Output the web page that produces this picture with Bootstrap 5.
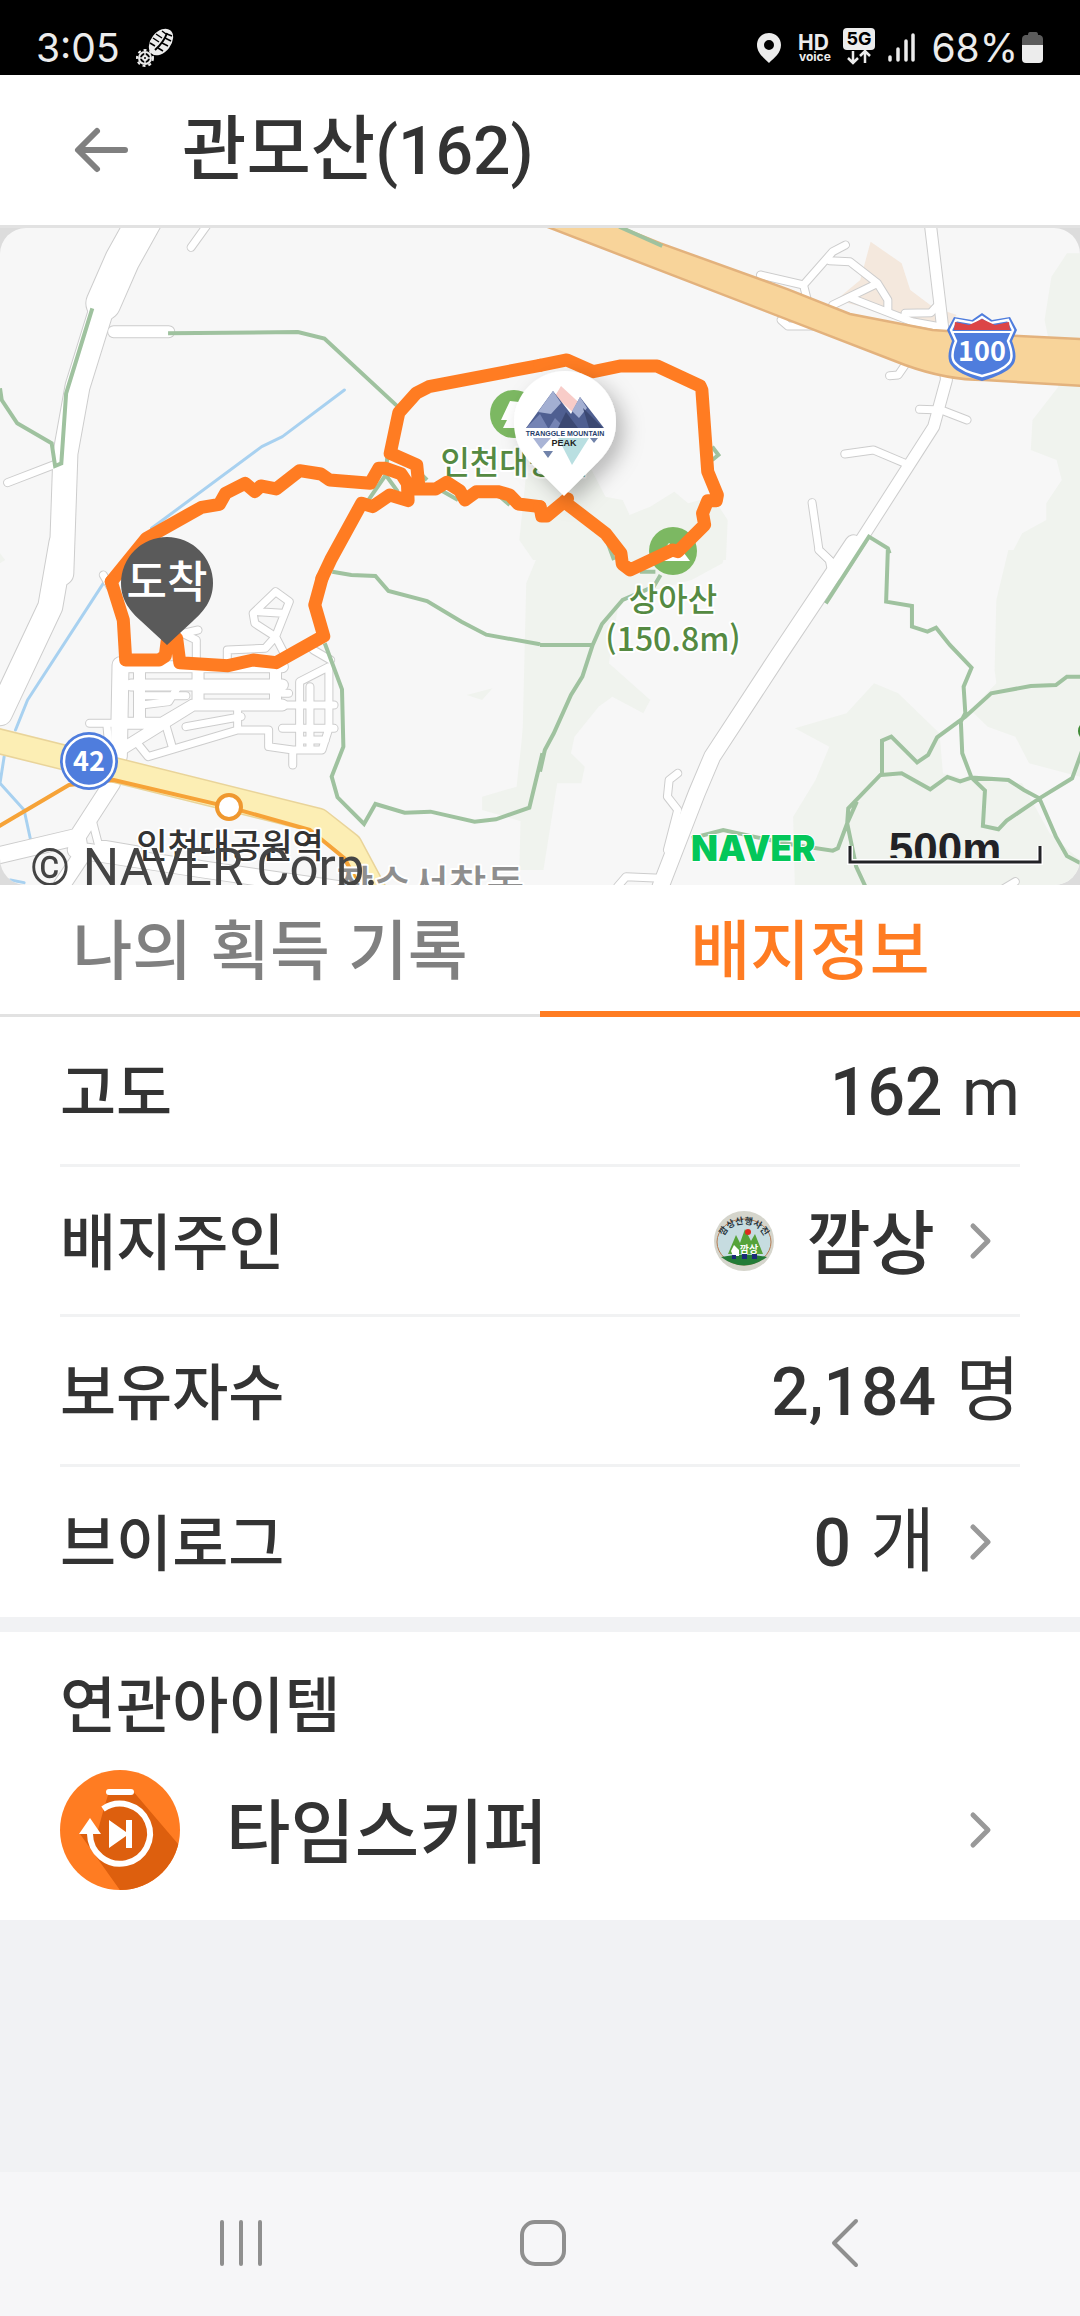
<!DOCTYPE html>
<html lang="ko">
<head>
<meta charset="utf-8">
<meta name="viewport" content="width=device-width, initial-scale=1">
<title>관모산(162)</title>
<link href="https://cdn.jsdelivr.net/npm/bootstrap@5.3.0/dist/css/bootstrap.min.css" rel="stylesheet">
<style>
  :root { --orange:#ff7c22; --ink:#333; --line:#f1f2f3; }
  body { font-family:"Noto Sans CJK KR","Noto Sans",sans-serif; color:var(--ink); background:#f1f2f4; line-height:1; }
  a { color:inherit; text-decoration:none; }
  .status { height:75px; background:#000; color:#ececec; font-family:Inter,Roboto,sans-serif; font-size:39px; line-height:56px; padding:20px 36px 0; }
  .battery { margin-top:12px; }
  .topbar { height:153px; border-bottom:3px solid #e2e2e2; padding:0 72px; gap:52px; }
  .topbar h1, .val, .item-name { font-size:70px; font-weight:500; line-height:80px; padding-bottom:4px; }
  .num { font-family:Roboto,"Noto Sans CJK KR",sans-serif; font-size:66px; }
  .map-box { background:#dcdcdc; }
  .map-box svg { display:block; width:100%; height:auto; }
  .tabs { height:132px; }
  .tab { font-size:65px; font-weight:500; color:#808080; border:0; border-bottom:3px solid #e2e2e2; background:#fff; padding:0 0 6px; }
  .tab.on { color:var(--orange); border-bottom:6px solid var(--orange); padding-bottom:3px; }
  .info { padding:0 60px; }
  .info-row { height:150px; border-bottom:3px solid var(--line); }
  .info-row:last-child { border-bottom:0; }
  .lbl { font-size:61px; font-weight:500; line-height:80px; padding-bottom:4px; }
  .val .lite { font-weight:400; }
  .go { gap:34px; padding-right:28px; }
  .avatar { width:60px; height:60px; margin-right:-2px; }
  .related { margin-top:15px; height:288px; padding:30px 60px; }
  .related h2 { margin-bottom:24px; }
  .item { gap:46px; padding-right:28px; height:120px; }
  .sysnav { height:144px; background:#f6f6f8; padding:0 84px 2px 90px; }
  .sysnav button { background:none; border:0; padding:0; }
  .spacer { min-height:252px; }

  .tile path, .tile polyline { vector-effect:non-scaling-stroke; }
  .wood { fill:#f0f3ee; }
  .xxl { stroke-width:calc(var(--edge) + 34px); }
  .xl { stroke-width:calc(var(--edge) + 24px); }
  .lg { stroke-width:calc(var(--edge) + 16px); }
  .md { stroke-width:calc(var(--edge) + 11px); }
  .sm { stroke-width:calc(var(--edge) + 7px); }
  .casing { --edge:2px; stroke:#cdcdcd; }
  .paving { --edge:0px; stroke:#fff; }
  .lines { fill:none; stroke-linejoin:round; stroke-linecap:round; }
  .trail { stroke:#9fc29f; stroke-width:4px; stroke-linejoin:miter; stroke-linecap:butt; }
  .water { stroke:#a8d1f0; stroke-width:3px; }
  .route { stroke:var(--orange); stroke-width:13px; }
  .map-txt { font-family:"Noto Sans CJK KR",sans-serif; font-weight:500; paint-order:stroke; stroke:#fff; stroke-width:4px; stroke-linejoin:round; }
  .green-txt { fill:#558a42; font-size:32px; text-anchor:middle; }
</style>
</head>
<body class="min-vh-100 d-flex flex-column">

<div class="status d-flex justify-content-between">
  <div class="d-flex gap-3 align-items-start">
    <span>3:05</span>
    <svg width="40" height="40" viewBox="0 0 40 40" class="mt-2" aria-hidden="true">
      <ellipse cx="25" cy="14" rx="10" ry="15" transform="rotate(38 25 14)" fill="#ececec"/>
      <g stroke="#000" fill="none"><path d="M31 5Q28 14 19 22" stroke-width="2"/><path d="M20 6l6 4M17 10l6 4M14 15l5 3M26 3l4 3M36 8l-5-2M35 13l-6-3M32 18l-6-3M27 23l-5-3" stroke-width="1.500"/></g>
      <circle cx="9" cy="30" r="8" fill="#000" stroke="#ececec" stroke-width="2" stroke-dasharray="3 3"/>
      <circle cx="9" cy="30" r="6" fill="none" stroke="#ececec" stroke-width="2"/>
      <circle cx="9" cy="30" r="2" fill="none" stroke="#ececec" stroke-width="2"/><path d="M9 24v4M9 32v4M3 30h4M11 30h4" stroke="#ececec" stroke-width="1.500"/>
    </svg>
  </div>
  <div class="d-flex align-items-start">
    <svg width="174" height="46" viewBox="750 25 174 46" class="mt-1" aria-hidden="true">
      <path fill="#ececec" fill-rule="evenodd" d="M770 34c-7 0-12 5-12 12 0 8 7 13 12 18 5-5 12-10 12-18 0-7-5-12-12-12zm0 7a5 5 0 110 10 5 5 0 010-10z"/>
      <text x="799" y="51" font-size="21" font-weight="700" fill="#ececec">HD</text>
      <text x="800" y="62" font-size="12" font-weight="700" fill="#ececec">voice</text>
      <rect x="844" y="29" width="32" height="22" rx="4" fill="#ececec"/>
      <text x="860" y="46" font-size="18" font-weight="700" text-anchor="middle" fill="#000">5G</text>
      <path d="M854 52v12m-5-5 5 5 5-5M866 64V52m-5 5 5-5 5 5" fill="none" stroke="#ececec" stroke-width="2.500"/>
      <path d="M891 58v3M899 50v11M907 42v19M914 36v25" stroke="#ececec" stroke-width="3.500" stroke-linecap="round"/>
    </svg>
    <span class="ms-2 me-1">68%</span>
    <svg width="22" height="32" viewBox="0 0 22 32" class="battery" aria-hidden="true">
      <path d="M6 3q0-3 2-3h6q2 0 2 3h2q3 1 3 4v6H0V7q0-3 3-4z" fill="#5b5b5b"/><path d="M0 13h21v14q0 4-4 4H4q-4 0-4-4z" fill="#ececec"/>
    </svg>
  </div>
</div>

<header class="topbar bg-white d-flex align-items-center">
  <a href="#" aria-label="뒤로">
    <svg width="58" height="48" viewBox="0 0 58 48" fill="none" stroke="#808080" stroke-width="6" stroke-linecap="round" stroke-linejoin="round"><path d="M53 24H7M25 5 6 24l19 19"/></svg>
  </a>
  <h1 class="m-0">관모산<span class="num">(162)</span></h1>
</header>

<div class="map-box">
<svg viewBox="0 228 1080 657" role="img" aria-label="관모산 등산 경로 지도">
  <defs>
    <clipPath id="frame"><rect x="0" y="228" width="1080" height="657" rx="26"/></clipPath>
    <clipPath id="scaleClip"><rect x="860" y="820" width="160" height="38"/></clipPath>
    <filter id="soft" x="-50%" y="-50%" width="200%" height="200%"><feDropShadow dx="8" dy="8" stdDeviation="10" flood-opacity=".25"/></filter>
    <g id="roads" class="tile">
      <g transform="translate(0 220) scale(.3444 .3333)">
        <path class="xxl" d="M425 -10 355 120 300 250"/>
        <path class="xl" d="M300 250 225 500 190 700 178 1060"/>
        <path class="sm" d="M605 10 555 82M155 735 22 788"/>
        <path class="md" d="M330 335H490"/>
      </g>
      <g transform="translate(540 220) scale(.3444 .3333)">
        <path class="md" d="M1132 0 1170 330 1180 480 1143 620 870 1060"/>
        <path class="sm" d="M887 75 850 95 765 195 640 165M765 195 775 235M840 122 900 125 980 190 1010 240V270M980 190 850 255M905 235 1080 305 1160 320M1060 280 1135 278 1160 250M700 300 720 318 800 318M1015 467 1040 465 1060 435M1102 568 1165 570 1240 600M885 702 968 690 1060 730M790 848 810 990 850 1030"/>
      </g>
      <g transform="translate(0 550) scale(.3444 .3333)">
        <path class="xl" d="M178 -20 146 170 0 490"/>
        <path class="lg" d="M350 345 345 620M325 700 225 860 0 915M225 860 235 920 180 1005M220 900 600 960 1000 1020"/>
        <path class="md" d="M350 350H820M380 405H820M575 350V460M800 350V465M820 465H560L350 600M350 520H470L560 465M405 360V520"/>
        <path class="sm" d="M820 465H970M820 535H970M690 465V540H780V590L850 600 935 600 955 535V350L870 395V600M850 600V645M690 540 430 620 395 575M500 590 480 520M540 530 700 500M410 465 490 455 520 405M410 437H540M590 420H800M900 410V600M820 430H838M800 125 840 155 800 260 740 220 735 190 800 125M750 185 820 190M800 260 770 295 660 300V340M800 260 830 320M575 240 530 250 570 270V330M260 520H350M300 75 320 110M310 520 315 580M270 820 285 880 400 900M960 330 910 300M870 570 945 570"/>
      </g>
      <g transform="translate(540 550) scale(.3444 .3333)">
        <path class="lg" d="M910 -20 690 320 500 620 455 730 350 1010"/>
        <path class="sm" d="M810 0 840 30 850 80M400 670 375 690 370 740 400 780 370 900M350 985 250 980 225 1010M1380 995 1340 1020"/>
      </g>
    </g>
  </defs>

  <g clip-path="url(#frame)">
    <rect x="0" y="228" width="1080" height="657" fill="#f7f7f7"/>
    <!-- woodland -->
    <g class="wood">
      <g transform="translate(540 220) scale(.3444 .3333)">
        <path d="M1568 100H1530L1485 170 1465 300 1505 500 1430 600 1425 690 1500 720 1515 780 1470 850V900L1400 940 1360 1020H1568z"/>
        <path d="M-40 760 150 750 190 830 240 840 260 885 320 860 390 815 430 850 500 830 545 900 540 1020H-20L-60 960z"/>
        <path d="M960 65 1050 130 1075 210 1140 260 1210 285 1190 310 1100 305 860 240 930 180z" fill="#f4e8dd"/>
      </g>
      <g transform="translate(540 550) scale(.3444 .3333)">
        <path d="M1360 0 1325 150 1320 360 1325 400 1250 480 1300 530 1380 560 1420 640 1568 680V0z"/>
        <path d="M0 0H540L530 40 440 90 230 150 200 340 320 450 300 490 210 440 170 470 100 560 90 610 130 650 120 700 50 700 10 960H-60L-40 100z"/>
        <path d="M970 400 1040 430 1160 550 1170 670 1250 690 1400 700 1480 850 1568 930V1010H740L735 800 800 690 840 590 740 535 890 490z"/>
      </g>
      <g transform="translate(0 550) scale(.3444 .3333)"><path d="M1568 420 1520 520 1500 710 1400 740 1400 780 1568 830zM1355 435 1430 415 1400 450zM0 10 15 30 0 40z"/></g>
    </g>
    <!-- streams -->
    <g class="lines tile water">
      <path transform="translate(0 220) scale(.3444 .3333)" d="M1000 510 820 650 760 680 440 925"/>
      <path transform="translate(0 550) scale(.3444 .3333)" d="M300 100 80 450 45 540M12 620 0 700 70 780 92 885M30 990 70 998"/>
    </g>
    <use href="#roads" class="lines casing"/>
    <use href="#roads" class="lines paving"/>

    <!-- expressway -->
    <g class="tile" transform="translate(540 220) scale(.3444 .3333)">
      <path d="M20 20 1060 435Q1180 480 1290 480L1580 498V358L1390 348 1140 330 900 282 720 208 350 70 230 20z" fill="#f8d49a" stroke="#e3b27d" stroke-width="2.500"/>
      <path class="trail" d="M230 20 355 78" fill="none"/>
    </g>
    <!-- national road 42 and metro line -->
    <g class="tile lines" transform="translate(0 550) scale(.3444 .3333)">
      <path d="M-10 572 925 812 1015 885 1085 1020" stroke="#e9d49a" stroke-width="26"/>
      <path d="M-10 572 925 812 1015 885 1085 1020" stroke="#fceeb4" stroke-width="23"/>
      <path d="M-5 830 200 705 330 690 660 770 900 840 1000 925 1045 1010" stroke="#f6a338" stroke-width="4"/>
    </g>
    <!-- hiking trails -->
    <g class="tile lines">
      <path class="trail" transform="translate(0 220) scale(.3444 .3333)" d="M268 265 192 520 178 730 160 738 150 670 50 610 5 540 0 505M488 340 865 336 942 356 1155 560M1125 705 1120 765 1070 840M1120 765 1155 815M1200 740 1240 780M1270 805 1330 840M1440 820 1480 855"/>
      <path class="trail" transform="translate(540 220) scale(.3444 .3333)" d="M500 680 518 705 500 720M830 1150 955 950 1010 985 1015 1000M190 950 215 1020"/>
      <path class="trail" transform="translate(0 550) scale(.3444 .3333)" d="M965 65 1020 75 1090 78 1128 123 1240 153 1340 215 1412 254 1568 283M943 280 993 418 997 590 963 680 980 742 1057 822 1090 762 1175 788 1250 785 1378 815 1440 808 1537 773 1575 610"/>
      <path class="trail" transform="translate(540 550) scale(.3444 .3333)" d="M0 285H153M350 75 330 110 240 150 180 222 153 285 123 380 90 435 40 550 14 600 0 665M1010 0 1005 155 1080 168V230L1125 245 1150 233 1190 285 1253 353 1230 410 1235 490 1222 515 1226 610 1253 683 1292 722 1286 828 1331 838 1355 812 1450 745 1545 685 1575 600M1580 380H1530L1498 405 1425 408 1310 430 1235 500 1153 562 1127 615 1095 637 1020 560 993 572V670L895 775 892 820 918 950 945 1010M990 675 1050 670 1133 718 1183 681 1220 694 1253 683 1360 690 1405 720 1450 745 1498 860 1530 918 1570 940M920 755 892 820 865 895 850 902 740 885 620 860 532 840 440 865M290 65H335"/>
    </g>
    <circle cx="1088" cy="731" r="10" fill="#3f8a36"/>

    <!-- park and peak markers -->
    <circle cx="514" cy="414" r="24" fill="#7cb862"/><path d="M510 401l-9 19h6l-4 8h16v-26z" fill="#fff"/>
    <circle cx="673" cy="551" r="24" fill="#7cb862"/><path d="M655 561l14-18 5 5 4-3 12 16z" fill="#fff"/>
    <text class="map-txt green-txt" x="514" y="474">인천대공원</text>

    <!-- recorded route -->
    <g class="tile lines route">
      <path transform="translate(0 220) scale(.3444 .3333)" d="M323 1085 425 955 585 862 637 853 655 820 712 790 740 815 757 798 802 807 870 752 932 762 957 780 1075 790 1100 745H1120L1165 762 1183 790 1185 842 1132 825 1082 860 1050 850 960 1020 935 1075M1190 807H1265L1297 787 1335 812 1350 840 1383 815H1445L1480 825 1505 852 1568 860M1568 436 1245 500 1208 520 1158 578 1133 700 1210 735 1217 807"/>
      <path transform="translate(540 220) scale(.3444 .3333)" d="M0 860 5 888H20L70 845 80 836 70 845 190 940 235 1000 239 1032 262 1050 385 990 400 995 478 915 472 880 487 842H512L515 825 487 755 470 510 465 498 340 438H235L155 455 78 420 0 436"/>
      <path transform="translate(0 550) scale(.3444 .3333)" d="M485 275 480 318 462 330H365L358 210 323 95M935 85 914 165 940 258 802 338 735 330 662 347 522 338 513 265 485 275"/>
    </g>

    <!-- expressway shield -->
    <path d="M982 313l10 7 18-3 7 13-5 11q7 18 0 25-6 8-30 15-24-7-30-15-7-7 0-25l-5-11 7-13 18 3z" fill="#4f7ddd"/>
    <path d="M982 317l9 6 17-3 5 10-5 11q7 17 0 23-6 7-26 12-20-5-26-12-7-6 0-23l-5-11 5-10 17 3z" fill="#4f7ddd" stroke="#fff" stroke-width="2.500"/>
    <path d="M955 322l14 3 13-6 13 6 14-3 1 8h-56z" fill="#dc4547"/><path d="M953 332h58" stroke="#fff" stroke-width="2"/>
    <text x="982" y="361" text-anchor="middle" font-family="Noto Sans CJK KR" font-weight="700" font-size="27" fill="#fff">100</text>
    <!-- route 42 shield -->
    <circle cx="89" cy="761" r="29" fill="#4f7ddd"/><circle cx="89" cy="761" r="25" fill="none" stroke="#fff" stroke-width="2.500"/>
    <text x="89" y="771" text-anchor="middle" font-family="Noto Sans CJK KR" font-weight="700" font-size="27" fill="#fff">42</text>
    <circle cx="229" cy="807" r="12" fill="#fff" stroke="#ef982f" stroke-width="4"/>

    <text class="map-txt green-txt" x="673" y="611">상아산</text>
    <text class="map-txt green-txt" x="673" y="651">(150.8m)</text>
    <text class="map-txt" x="230" y="858" font-size="34" text-anchor="middle" fill="#333">인천대공원역</text>
    <text class="map-txt" x="430" y="900" font-size="41" text-anchor="middle" fill="#8e8e8e">장수서창동</text>
    <text x="30" y="885" font-family="Roboto" font-size="51" fill="#444">© NAVER Corp.</text>
    <text x="691" y="861" font-family="Inter" font-weight="900" font-size="35" fill="#03c75a" stroke="#fff" stroke-width="2" paint-order="stroke">NAVER</text>
    <text x="945" y="864" text-anchor="middle" font-family="Liberation Sans" font-weight="700" font-size="44" fill="#222226" clip-path="url(#scaleClip)">500m</text>
    <path d="M850 846v16h190v-16" fill="none" stroke="#fff" stroke-width="6"/><path d="M850 846v16h190v-16" fill="none" stroke="#222226" stroke-width="3"/>

    <!-- summit badge pin -->
    <path filter="url(#soft)" d="M565 371a51 51 0 0151 51c0 22-12 34-22 44l-30 30-30-30c-10-10-20-22-20-44a51 51 0 0151-51z" fill="#fff"/>
    <path d="M561 386l26 24-8 8-24-22z" fill="#f8ccc8"/>
    <path d="M526 428l27-37 18 23 9-17 24 31z" fill="#4f5f91"/>
    <path d="M538 412l15-21 8 12-10 11zM572 411l8-14 7 11-8 10z" fill="#a3afd2"/>
    <path d="M526 428l14-14 8 14zM555 418l10 10h-16z" fill="#7584b4"/><path d="M566 412l12 16h-20zM583 408l20 20h-14z" fill="#3b4872"/>
    <path d="M533 438h18l-10 11z" fill="#a9b4d6"/><path d="M543 451h10l-5 7zM590 438h8l-4 5z" fill="#7183aa"/><path d="M558 438h31l-17 27z" fill="#b9dfe1"/>
    <text x="565" y="436" text-anchor="middle" font-family="Liberation Sans" font-weight="700" font-size="7" fill="#263c6b">TRANGGLE MOUNTAIN</text>
    <text x="564" y="446" text-anchor="middle" font-family="Liberation Sans" font-weight="700" font-size="9" fill="#222">PEAK</text>

    <!-- finish pin -->
    <path d="M167 537a46 46 0 0146 46c0 18-10 29-20 38l-26 24-26-24c-10-9-20-20-20-38a46 46 0 0146-46z" fill="#5a5a5a"/>
    <text x="167" y="598" text-anchor="middle" font-family="Noto Sans CJK KR" font-weight="500" font-size="44" fill="#fff">도착</text>
  </g>
</svg>
</div>

<div class="tabs d-flex" role="tablist">
  <button class="tab w-50" type="button" role="tab" aria-selected="false">나의 획득 기록</button>
  <button class="tab on w-50" type="button" role="tab" aria-selected="true">배지정보</button>
</div>

<main class="info bg-white">
  <div class="info-row d-flex align-items-center justify-content-between">
    <span class="lbl">고도</span><span class="val"><span class="num">162</span> <span class="lite num">m</span></span>
  </div>
  <div class="info-row d-flex align-items-center justify-content-between">
    <span class="lbl">배지주인</span>
    <a href="#" class="go d-flex align-items-center">
      <svg class="avatar" viewBox="0 0 60 60" aria-hidden="true">
        <defs><path id="arc" d="M9 31C10 7 50 7 51 31"/></defs>
        <circle cx="30" cy="30" r="30" fill="#d5d5cc"/>
        <ellipse cx="30" cy="31" rx="27" ry="23" fill="#c6dce0" stroke="#b77b52" stroke-width="1"/>
        <path d="M7 46q23-5 46 0-23 17-46 0z" fill="#237b37"/>
        <path d="M14 43l8-19 4 8 5-14 6 12 4-7 8 20z" fill="#55a33a"/>
        <circle cx="34" cy="21" r="3" fill="#de2a1e"/>
        <path d="M17 40l3-6 5 5v6h-6z" fill="#fff"/><path d="M18 44h4v4h-4zM28 43h5v5h-5zM38 43h5v5h-5z" fill="#1b2a78"/>
        <text font-size="9" font-weight="700" fill="#26333b" text-anchor="middle"><textPath href="#arc" startOffset="50%">깜상산행사진</textPath></text>
        <text x="35" y="42" font-size="10" font-weight="700" text-anchor="middle" fill="#fff">깜상</text>
      </svg>
      <span class="val">깜상</span>
      <svg width="23" height="38" viewBox="0 0 23 38" fill="none" stroke="#999" stroke-width="5" stroke-linecap="round" stroke-linejoin="round"><path d="M4 4l15 15L4 34"/></svg>
    </a>
  </div>
  <div class="info-row d-flex align-items-center justify-content-between">
    <span class="lbl">보유자수</span><span class="val"><span class="num">2,184</span> <span class="lite">명</span></span>
  </div>
  <div class="info-row d-flex align-items-center justify-content-between">
    <span class="lbl">브이로그</span>
    <a href="#" class="go d-flex align-items-center">
      <span class="val"><span class="num">0</span> <span class="lite">개</span></span>
      <svg width="23" height="38" viewBox="0 0 23 38" fill="none" stroke="#999" stroke-width="5" stroke-linecap="round" stroke-linejoin="round"><path d="M4 4l15 15L4 34"/></svg>
    </a>
  </div>
</main>

<section class="related bg-white">
  <h2 class="lbl">연관아이템</h2>
  <a href="#" class="item d-flex align-items-center">
    <svg width="120" height="120" viewBox="0 0 120 120" aria-hidden="true">
      <defs><clipPath id="disc"><circle cx="60" cy="60" r="60"/></clipPath></defs>
      <circle cx="60" cy="60" r="60" fill="#ff7c22"/>
      <path clip-path="url(#disc)" d="M48 25 72 20 130 88V130H67L20 64 38 60 44 38z" fill="#dd5f0e"/>
      <g fill="none" stroke="#fff" stroke-width="6" stroke-linecap="round"><path d="M49 22H71"/><path d="M43 39A30 30 0 1130 64" stroke-linecap="butt"/></g>
      <path d="M19 64 30 48 41 64z" fill="#fff"/><path d="M49 50 66 62V50h6v28h-6V66L49 78z" fill="#fff"/>
    </svg>
    <span class="item-name flex-grow-1">타임스키퍼</span>
    <svg width="23" height="38" viewBox="0 0 23 38" fill="none" stroke="#999" stroke-width="5" stroke-linecap="round" stroke-linejoin="round"><path d="M4 4l15 15L4 34"/></svg>
  </a>
</section>

<div class="spacer flex-grow-1"></div>

<nav class="sysnav d-flex align-items-center">
  <button class="col" type="button" aria-label="최근 앱"><svg width="44" height="48" viewBox="0 0 44 48" stroke="#8f8f8f" stroke-width="4" stroke-linecap="round"><path d="M3 3v42M22 3v42M41 3v42"/></svg></button>
  <button class="col" type="button" aria-label="홈"><svg width="48" height="48" viewBox="0 0 48 48" fill="none" stroke="#8f8f8f" stroke-width="4"><rect x="3" y="3" width="42" height="42" rx="13"/></svg></button>
  <button class="col" type="button" aria-label="뒤로"><svg width="28" height="50" viewBox="0 0 28 50" fill="none" stroke="#8f8f8f" stroke-width="4" stroke-linecap="round" stroke-linejoin="round"><path d="M25 3 3 25l22 22"/></svg></button>
</nav>

<script src="https://cdn.jsdelivr.net/npm/bootstrap@5.3.0/dist/js/bootstrap.bundle.min.js"></script>
</body>
</html>
